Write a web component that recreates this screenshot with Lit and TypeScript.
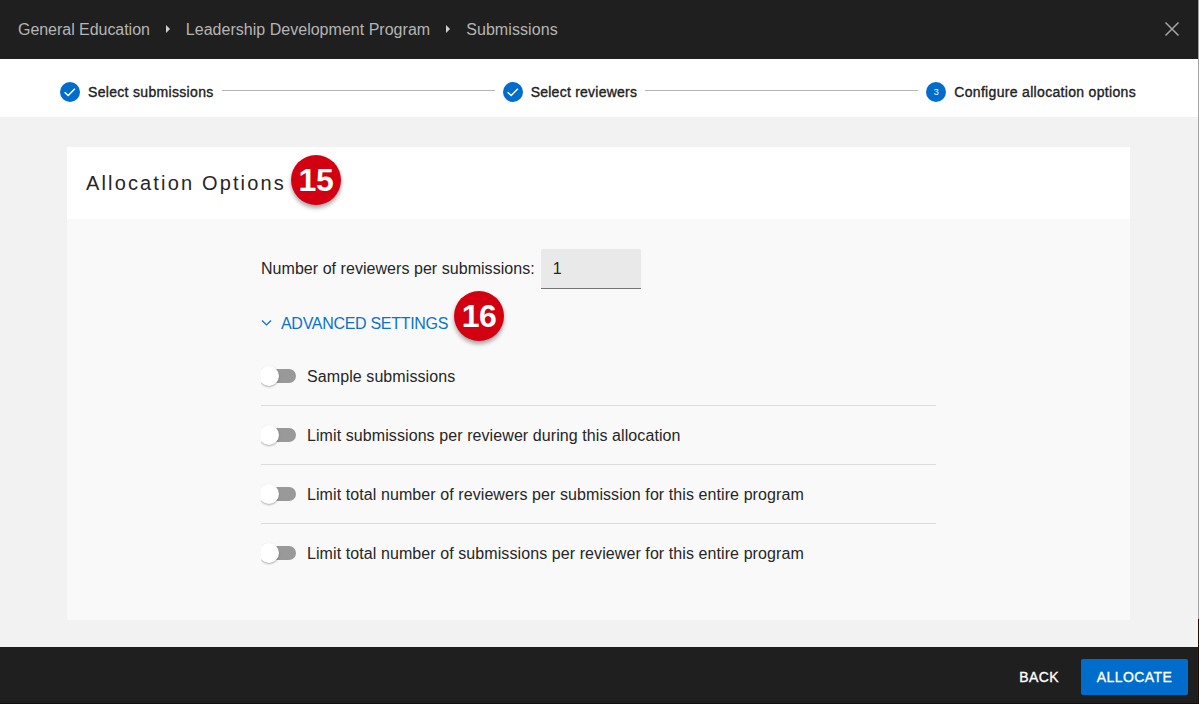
import { LitElement, html, svg, css } from "lit";
import { customElement } from "lit/decorators.js";

const check = svg`<path d="M4.6 10.2l3.6 3.3 6.7-6.8" fill="none" stroke="#fff" stroke-width="1.5"/>`;

@customElement("app-root")
export class AppRoot extends LitElement {
  static styles = css`
    :host {
      display: block;
      width: 1199px;
      height: 704px;
      font-family: "Liberation Sans", Arial, sans-serif;
      font-size: 16px;
      color: #262626;
      overflow: hidden;
    }
    * { box-sizing: border-box; }
    svg { display: block; flex: none; }
    span { white-space: nowrap; }
    .frame { display: grid; grid-template-columns: 1198px 1px; height: 704px; }
    .page { display: flex; flex-direction: column; background: #f2f2f2; }
    .edge { background: linear-gradient(#a3a3a3 619px, #1c0f0a 619px); }
    header {
      height: 59px;
      flex: none;
      background: #1f1f1f;
      color: #b5b5b5;
      display: flex;
      align-items: center;
      padding: 0 18px;
    }
    header .sep { margin: 0 16px 1px; }
    header .close { margin: 0 0 1px auto; }
    .c1 { letter-spacing: -0.04px; }
    .c2 { letter-spacing: 0.02px; }
    .c3 { letter-spacing: 0.08px; }
    .stepper {
      height: 58px;
      flex: none;
      background: #fff;
      display: flex;
      align-items: center;
      padding: 8px 62px 0 60px;
      font-size: 14px;
      color: #212121;
      -webkit-text-stroke: 0.35px #212121;
    }
    .stepper span { margin-left: 8px; letter-spacing: 0.32px; }
    .stepper .reviewers { letter-spacing: 0.24px; }
    .stepper .line { flex: 1; height: 1px; background: #b5b5b5; margin: 0 8px 3px; }
    .dot {
      width: 20px; height: 20px; border-radius: 50%; background: #006dcc; color: #fff;
      font-size: 9px; line-height: 21px; text-align: center; -webkit-text-stroke: 0;
    }
    .card {
      margin: 30px 68px 27px 67px;
      height: 473px;
      background: #f9f9f9;
      flex: none;
      display: flex;
      flex-direction: column;
    }
    .title { height: 72px; background: #fff; padding-left: 19px; display: flex; align-items: center; font-size: 20px; letter-spacing: 2.15px; }
    .badge {
      width: 50px; height: 50px; border-radius: 50%; background: #d20010; color: #fff;
      font-weight: 700; font-size: 32px; line-height: 50px; text-align: center; letter-spacing: -0.5px;
      box-shadow: 0 3px 4px rgba(0, 0, 0, 0.35); flex: none;
    }
    .title .badge { margin: 0 0 6px 5px; }
    .body { padding: 30px 194px 0; }
    .field { display: flex; height: 40px; align-items: center; }
    .field span { letter-spacing: 0.045px; }
    .input {
      width: 100px; height: 40px; margin-left: 6px; background: #e9e9e9; border-bottom: 1px solid #757575;
      border-radius: 2px 2px 0 0; padding-left: 12px; line-height: 39px;
    }
    .advanced { display: flex; align-items: center; height: 50px; margin-top: 2px; color: #0b72ce; }
    .advanced span { margin: 16px 0 0 9px; letter-spacing: -0.3px; }
    .advanced svg { margin-top: 13px; }
    .advanced .badge { margin-left: 6px; }
    .list { margin-top: 6px; }
    .row { height: 59px; display: flex; align-items: center; border-bottom: 1px solid #dcdcdc; }
    .row:last-child { border-color: transparent; }
    .row span { margin: 2px 0 0 11px; letter-spacing: 0.085px; }
    .switch { width: 35px; height: 26px; display: flex; align-items: center; overflow: hidden; }
    .track { width: 35px; height: 14px; border-radius: 7px; background: #999; display: flex; align-items: center; }
    .knob { width: 20px; height: 20px; margin-left: -2px; border-radius: 50%; background: #fff; flex: none; box-shadow: 0 1px 2px rgba(0, 0, 0, 0.3); }
    footer {
      height: 57px; background: #1f1f1f; border-bottom: 1px solid #170b0d; color: #fff; display: flex; align-items: center;
      justify-content: flex-end; padding: 4px 10px 0 0; font-size: 14px;
      -webkit-text-stroke: 0.35px #fff;
    }
    .back { margin-right: 22px; letter-spacing: 0.4px; }
    .allocate { width: 107px; height: 36px; line-height: 36px; text-align: center; background: #006dcc; border-radius: 2px; letter-spacing: 0.4px; }
  `;

  private options = [
    "Sample submissions",
    "Limit submissions per reviewer during this allocation",
    "Limit total number of reviewers per submission for this entire program",
    "Limit total number of submissions per reviewer for this entire program",
  ];

  private sep() {
    return html`<svg class="sep" width="4" height="8" viewBox="0 0 4 8"><path d="M0 0l4 4-4 4z" fill="#d0d0d0"/></svg>`;
  }

  private done() {
    return html`<svg width="20" height="20" viewBox="0 0 20 20"><circle cx="10" cy="10" r="10" fill="#006dcc"/>${check}</svg>`;
  }

  render() {
    return html`<div class="frame">
      <div class="page">
        <header>
          <span class="c1">General Education</span>${this.sep()}<span class="c2">Leadership Development Program</span>${this.sep()}<span class="c3">Submissions</span>
          <svg class="close" width="16" height="16" viewBox="0 0 16 16"><path d="M1.5 1.5l13 13M14.5 1.5l-13 13" stroke="#a5a5a5" stroke-width="1.5"/></svg>
        </header>
        <nav class="stepper">
          ${this.done()}<span>Select submissions</span><div class="line"></div>
          ${this.done()}<span class="reviewers">Select reviewers</span><div class="line"></div>
          <div class="dot">3</div><span>Configure allocation options</span>
        </nav>
        <main class="card">
          <div class="title"><span>Allocation Options</span><div class="badge">15</div></div>
          <div class="body">
            <div class="field"><span>Number of reviewers per submissions:</span><div class="input">1</div></div>
            <div class="advanced">
              <svg width="11" height="8" viewBox="0 0 11 8"><path d="M1 1.5l4.5 4.4L10 1.5" fill="none" stroke="#0b72ce" stroke-width="1.3"/></svg>
              <span>ADVANCED SETTINGS</span><div class="badge">16</div>
            </div>
            <div class="list">
              ${this.options.map((o) => html`<div class="row"><div class="switch"><div class="track"><div class="knob"></div></div></div><span>${o}</span></div>`)}
            </div>
          </div>
        </main>
        <footer><span class="back">BACK</span><div class="allocate">ALLOCATE</div></footer>
      </div>
      <div class="edge"></div>
    </div>`;
  }
}
